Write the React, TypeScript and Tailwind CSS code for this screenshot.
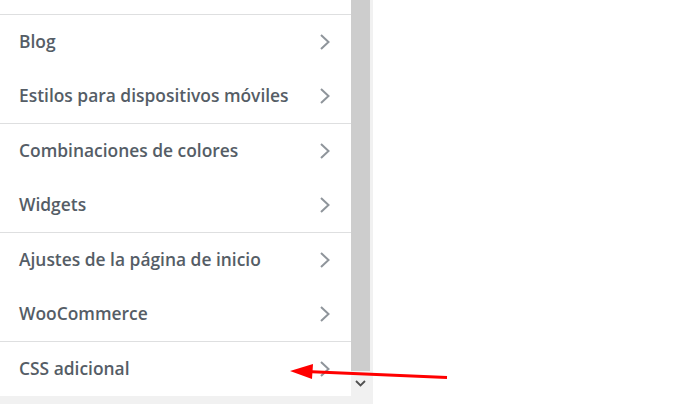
const groups = [
  ["Blog", "Estilos para dispositivos móviles"],
  ["Combinaciones de colores", "Widgets"],
  ["Ajustes de la página de inicio", "WooCommerce"],
  ["CSS adicional"],
];

function Chevron() {
  return (
    <svg width="12" height="18" viewBox="0 0 12 18" className="text-[#8f959b]">
      <path d="M2 2 L9.5 9 L2 16" fill="none" stroke="currentColor" strokeWidth="2" />
    </svg>
  );
}

export default function App() {
  return (
    <div className="relative flex h-[404px] w-[688px] overflow-hidden bg-white font-['Open_Sans',sans-serif]">
      <div className="flex w-[351px] flex-col bg-[#f1f1f1]">
        <div className="h-[14px] bg-white" />
        {groups.map((group, gi) => (
          <div key={gi} className="border-t border-[#dedfe0] bg-white">
            {group.map((title) => (
              <div key={title} className="flex h-[54px] items-center justify-between pl-[19px] pr-[20px]">
                <span className="text-[17.4px] leading-none font-semibold text-[#555d66]">{title}</span>
                <Chevron />
              </div>
            ))}
          </div>
        ))}
      </div>
      <div className="flex w-[22px] flex-col bg-[#f1f1f1]">
        <div className="h-[371px] w-[19px] bg-[#cdcdcd]" />
        <div className="flex w-[19px] justify-center pt-[9px]">
          <svg width="11" height="7" viewBox="0 0 11 7">
            <path d="M1 1 L5.5 5.5 L10 1" fill="none" stroke="#505050" strokeWidth="1.8" />
          </svg>
        </div>
      </div>
      <svg className="absolute left-0 top-0" width="688" height="404" viewBox="0 0 688 404">
        <line x1="447" y1="377.5" x2="306" y2="371.5" stroke="#ff0000" strokeWidth="3" />
        <polygon points="290,371 313,364 312,379" fill="#ff0000" />
      </svg>
    </div>
  );
}
